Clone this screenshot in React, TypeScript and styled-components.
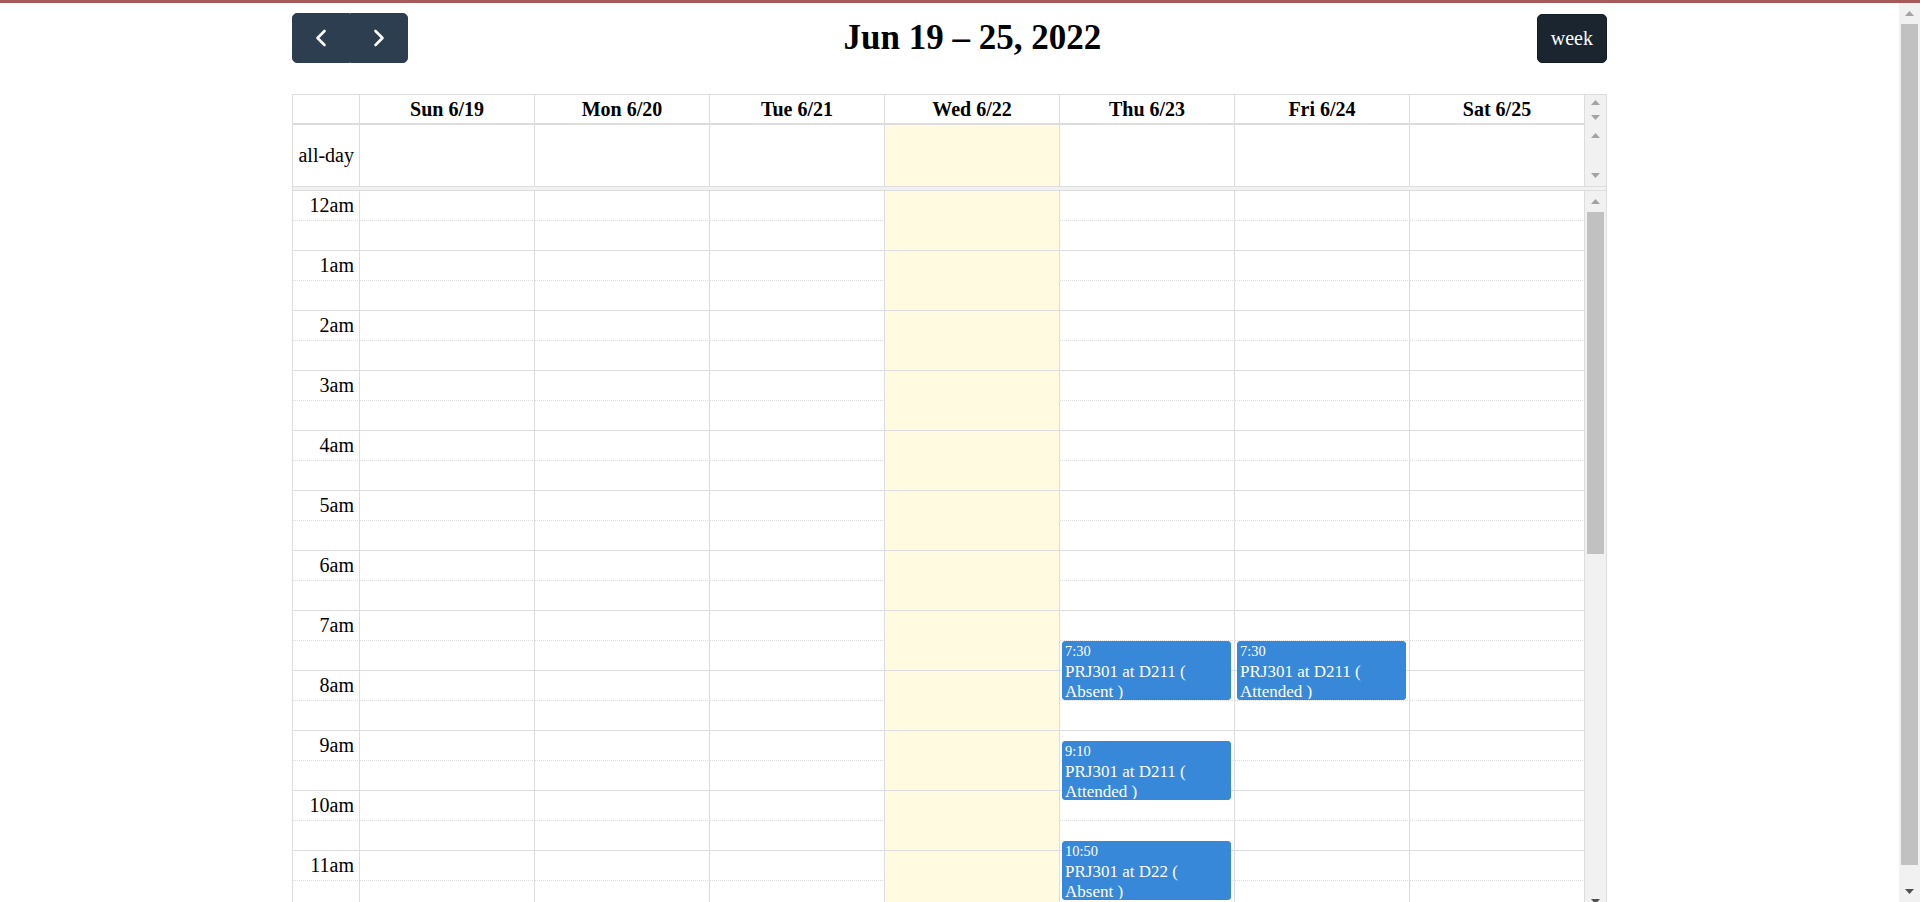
import React from 'react';
import styled, { createGlobalStyle } from 'styled-components';

const BORDER = '#ddd';
const TODAY_BG = '#fffae0';
const EVENT_BG = '#3788d8';
const HOUR = 60; // px per hour in the time grid

const GlobalStyle = createGlobalStyle`
  html, body {
    margin: 0;
    padding: 0;
    height: 100%;
    overflow: hidden;
    background: #fff;
  }
  body {
    font-family: "Liberation Serif", "Times New Roman", serif;
    color: #000;
  }
  #root {
    height: 100%;
  }
`;

/* ---------- drawn scrollbar (windows style) ---------- */

const Bar = styled.div`
  width: 21px;
  flex: none;
  display: flex;
  flex-direction: column;
  background: #f1f1f1;
`;

const ArrowButton = styled.div<{ $h: number }>`
  height: ${p => p.$h}px;
  flex: none;
  display: flex;
  align-items: center;
  justify-content: center;
`;

const Track = styled.div`
  flex: 1;
  min-height: 0;
  display: flex;
  flex-direction: column;
`;

const Thumb = styled.div`
  margin: 0 2px;
  background: #c1c1c1;
`;

const Arrow = ({ up, color }: { up?: boolean; color: string }) => (
  <svg width="9" height="5" viewBox="0 0 9 5">
    <polygon points={up ? '0,5 4.5,0 9,5' : '0,0 9,0 4.5,5'} fill={color} />
  </svg>
);

const Scrollbar = ({ button = 21, thumb, active }: { button?: number; thumb?: number; active?: boolean }) => (
  <Bar>
    <ArrowButton $h={button}>
      <Arrow up color="#a3a3a3" />
    </ArrowButton>
    <Track>{thumb ? <Thumb style={{ height: thumb }} /> : null}</Track>
    <ArrowButton $h={button}>
      <Arrow color={active ? '#505050' : '#a3a3a3'} />
    </ArrowButton>
  </Bar>
);

/* ---------- page ---------- */

const Shell = styled.div`
  height: 100%;
  display: flex;
  flex-direction: column;
`;

const TopLine = styled.div`
  height: 3px;
  flex: none;
  background: #a65a5a;
`;

const Viewport = styled.div`
  flex: 1;
  min-height: 0;
  display: flex;
`;

const PageArea = styled.div`
  flex: 1;
  overflow: hidden;
`;

const Page = styled.div`
  width: 1315px;
  margin: 0 auto;
  padding: 10px 0 6px;
`;

const Toolbar = styled.div`
  display: flex;
  justify-content: space-between;
  align-items: center;
  margin-bottom: 31px;
`;

const ButtonGroup = styled.div`
  display: flex;
`;

const NavButton = styled.button<{ $side: 'left' | 'right' }>`
  height: 50px;
  padding: 0 13px;
  display: flex;
  align-items: center;
  background: #2c3e50;
  border: 1px solid #2c3e50;
  color: #fff;
  border-radius: ${p => (p.$side === 'left' ? '5px 0 0 5px' : '0 5px 5px 0')};
  cursor: pointer;
`;

const ViewButton = styled.button`
  height: 49px;
  padding: 0 13px;
  background: #1a252f;
  border: 1px solid #151e27;
  border-radius: 5px;
  color: #fff;
  font-family: "Liberation Serif", "Times New Roman", serif;
  font-size: 20px;
  cursor: pointer;
`;

const Title = styled.h2`
  margin: 0;
  font-size: 35px;
  font-weight: bold;
`;

/* ---------- calendar grid ---------- */

const Calendar = styled.div`
  border: 1px solid ${BORDER};
`;

const Section = styled.div<{ $h: number }>`
  height: ${p => p.$h}px;
  display: flex;
`;

const SectionBody = styled.div`
  width: 1292px;
  flex: none;
  overflow: hidden;
`;

const Row = styled.div`
  display: grid;
  grid-template-columns: 67px repeat(7, 175px);
  height: 100%;
`;

const HeadCell = styled.div`
  border-right: 1px solid ${BORDER};
  border-bottom: 2px solid ${BORDER};
  display: flex;
  align-items: center;
  justify-content: center;
  font-size: 20px;
  font-weight: bold;
`;

const AllDayCell = styled.div<{ $today?: boolean }>`
  border-right: 1px solid ${BORDER};
  background: ${p => (p.$today ? TODAY_BG : '#fff')};
`;

const AxisLabel = styled.div`
  border-right: 1px solid ${BORDER};
  display: flex;
  align-items: center;
  justify-content: flex-end;
  padding-right: 5px;
  font-size: 20px;
`;

const Divider = styled.div`
  height: 3px;
  background: #f1f1f1;
  border-top: 1px solid ${BORDER};
  border-bottom: 1px solid ${BORDER};
`;

const BodyGrid = styled.div`
  display: grid;
  grid-template-columns: 67px repeat(7, 175px);
`;

const Column = styled.div<{ $today?: boolean }>`
  position: relative;
  display: flex;
  flex-direction: column;
  background: ${p => (p.$today ? TODAY_BG : 'transparent')};
`;

const Slot = styled.div<{ $minor: boolean; $today?: boolean }>`
  height: 30px;
  flex: none;
  box-sizing: border-box;
  border-right: 1px solid ${BORDER};
  border-bottom: 1px ${p => (p.$minor ? 'dotted' : 'solid')}
    ${p => (p.$minor && p.$today ? 'transparent' : BORDER)};
`;

const SlotLabel = styled(Slot)`
  display: flex;
  align-items: center;
  justify-content: flex-end;
  padding-right: 5px;
  font-size: 20px;
`;

const Event = styled.div`
  position: absolute;
  left: 2px;
  right: 2.5%;
  height: 59px;
  box-sizing: border-box;
  background: ${EVENT_BG};
  border: 1px solid ${EVENT_BG};
  border-radius: 3px;
  color: #fff;
  padding: 1px 2px 0 2px;
  overflow: hidden;
  font-size: 17px;
`;

const EventTime = styled.div`
  font-size: 14.45px;
  margin-bottom: 1.5px;
  white-space: nowrap;
`;

const EventTitle = styled.div``;

const Chevron = ({ dir }: { dir: 'left' | 'right' }) => (
  <svg width="30" height="30" viewBox="0 0 30 30">
    <polyline
      points={dir === 'left' ? '18.5,8 11.5,15 18.5,22' : '11.5,8 18.5,15 11.5,22'}
      fill="none"
      stroke="#fff"
      strokeWidth="2.6"
      strokeLinecap="round"
      strokeLinejoin="round"
    />
  </svg>
);

const days = ['Sun 6/19', 'Mon 6/20', 'Tue 6/21', 'Wed 6/22', 'Thu 6/23', 'Fri 6/24', 'Sat 6/25'];
const TODAY = 3;

const events = [
  { day: 4, start: '7:30', title: 'PRJ301 at D211 ( Absent )' },
  { day: 5, start: '7:30', title: 'PRJ301 at D211 ( Attended )' },
  { day: 4, start: '9:10', title: 'PRJ301 at D211 ( Attended )' },
  { day: 4, start: '10:50', title: 'PRJ301 at D22 ( Absent )' },
  { day: 4, start: '12:50', title: 'PRJ301 at D211 ( Attended )' },
];

const hourLabel = (h: number) => `${h % 12 === 0 ? 12 : h % 12}${h < 12 ? 'am' : 'pm'}`;
const slots = Array.from({ length: 48 }, (_, i) => i);

const toTop = (t: string) => {
  const [h, m] = t.split(':').map(Number);
  return h * HOUR + (m * HOUR) / 60;
};

export default function App() {
  return (
    <>
      <GlobalStyle />
      <Shell>
        <TopLine />
        <Viewport>
          <PageArea>
            <Page>
              <Toolbar>
                <ButtonGroup>
                  <NavButton $side="left" aria-label="prev">
                    <Chevron dir="left" />
                  </NavButton>
                  <NavButton $side="right" aria-label="next">
                    <Chevron dir="right" />
                  </NavButton>
                </ButtonGroup>
                <Title>Jun 19 – 25, 2022</Title>
                <ViewButton>week</ViewButton>
              </Toolbar>

              <Calendar>
                <Section $h={30}>
                  <SectionBody>
                    <Row>
                      <HeadCell />
                      {days.map(d => (
                        <HeadCell key={d}>{d}</HeadCell>
                      ))}
                    </Row>
                  </SectionBody>
                  <Scrollbar button={15} />
                </Section>

                <Section $h={61}>
                  <SectionBody>
                    <Row>
                      <AxisLabel>all-day</AxisLabel>
                      {days.map((d, i) => (
                        <AllDayCell key={d} $today={i === TODAY} />
                      ))}
                    </Row>
                  </SectionBody>
                  <Scrollbar />
                </Section>

                <Divider />

                <Section $h={721}>
                  <SectionBody>
                    <BodyGrid>
                      <Column>
                        {slots.map(s => (
                          <SlotLabel key={s} $minor={s % 2 === 0}>
                            {s % 2 === 0 ? hourLabel(s / 2) : null}
                          </SlotLabel>
                        ))}
                      </Column>
                      {days.map((d, i) => (
                        <Column key={d} $today={i === TODAY}>
                          {slots.map(s => (
                            <Slot key={s} $minor={s % 2 === 0} $today={i === TODAY} />
                          ))}
                          {events
                            .filter(e => e.day === i)
                            .map(e => (
                              <Event key={e.start} style={{ top: toTop(e.start) }}>
                                <EventTime>{e.start}</EventTime>
                                <EventTitle>{e.title}</EventTitle>
                              </Event>
                            ))}
                        </Column>
                      ))}
                    </BodyGrid>
                  </SectionBody>
                  <Scrollbar thumb={342} active />
                </Section>
              </Calendar>
            </Page>
          </PageArea>
          <Scrollbar thumb={841} active />
        </Viewport>
      </Shell>
    </>
  );
}
